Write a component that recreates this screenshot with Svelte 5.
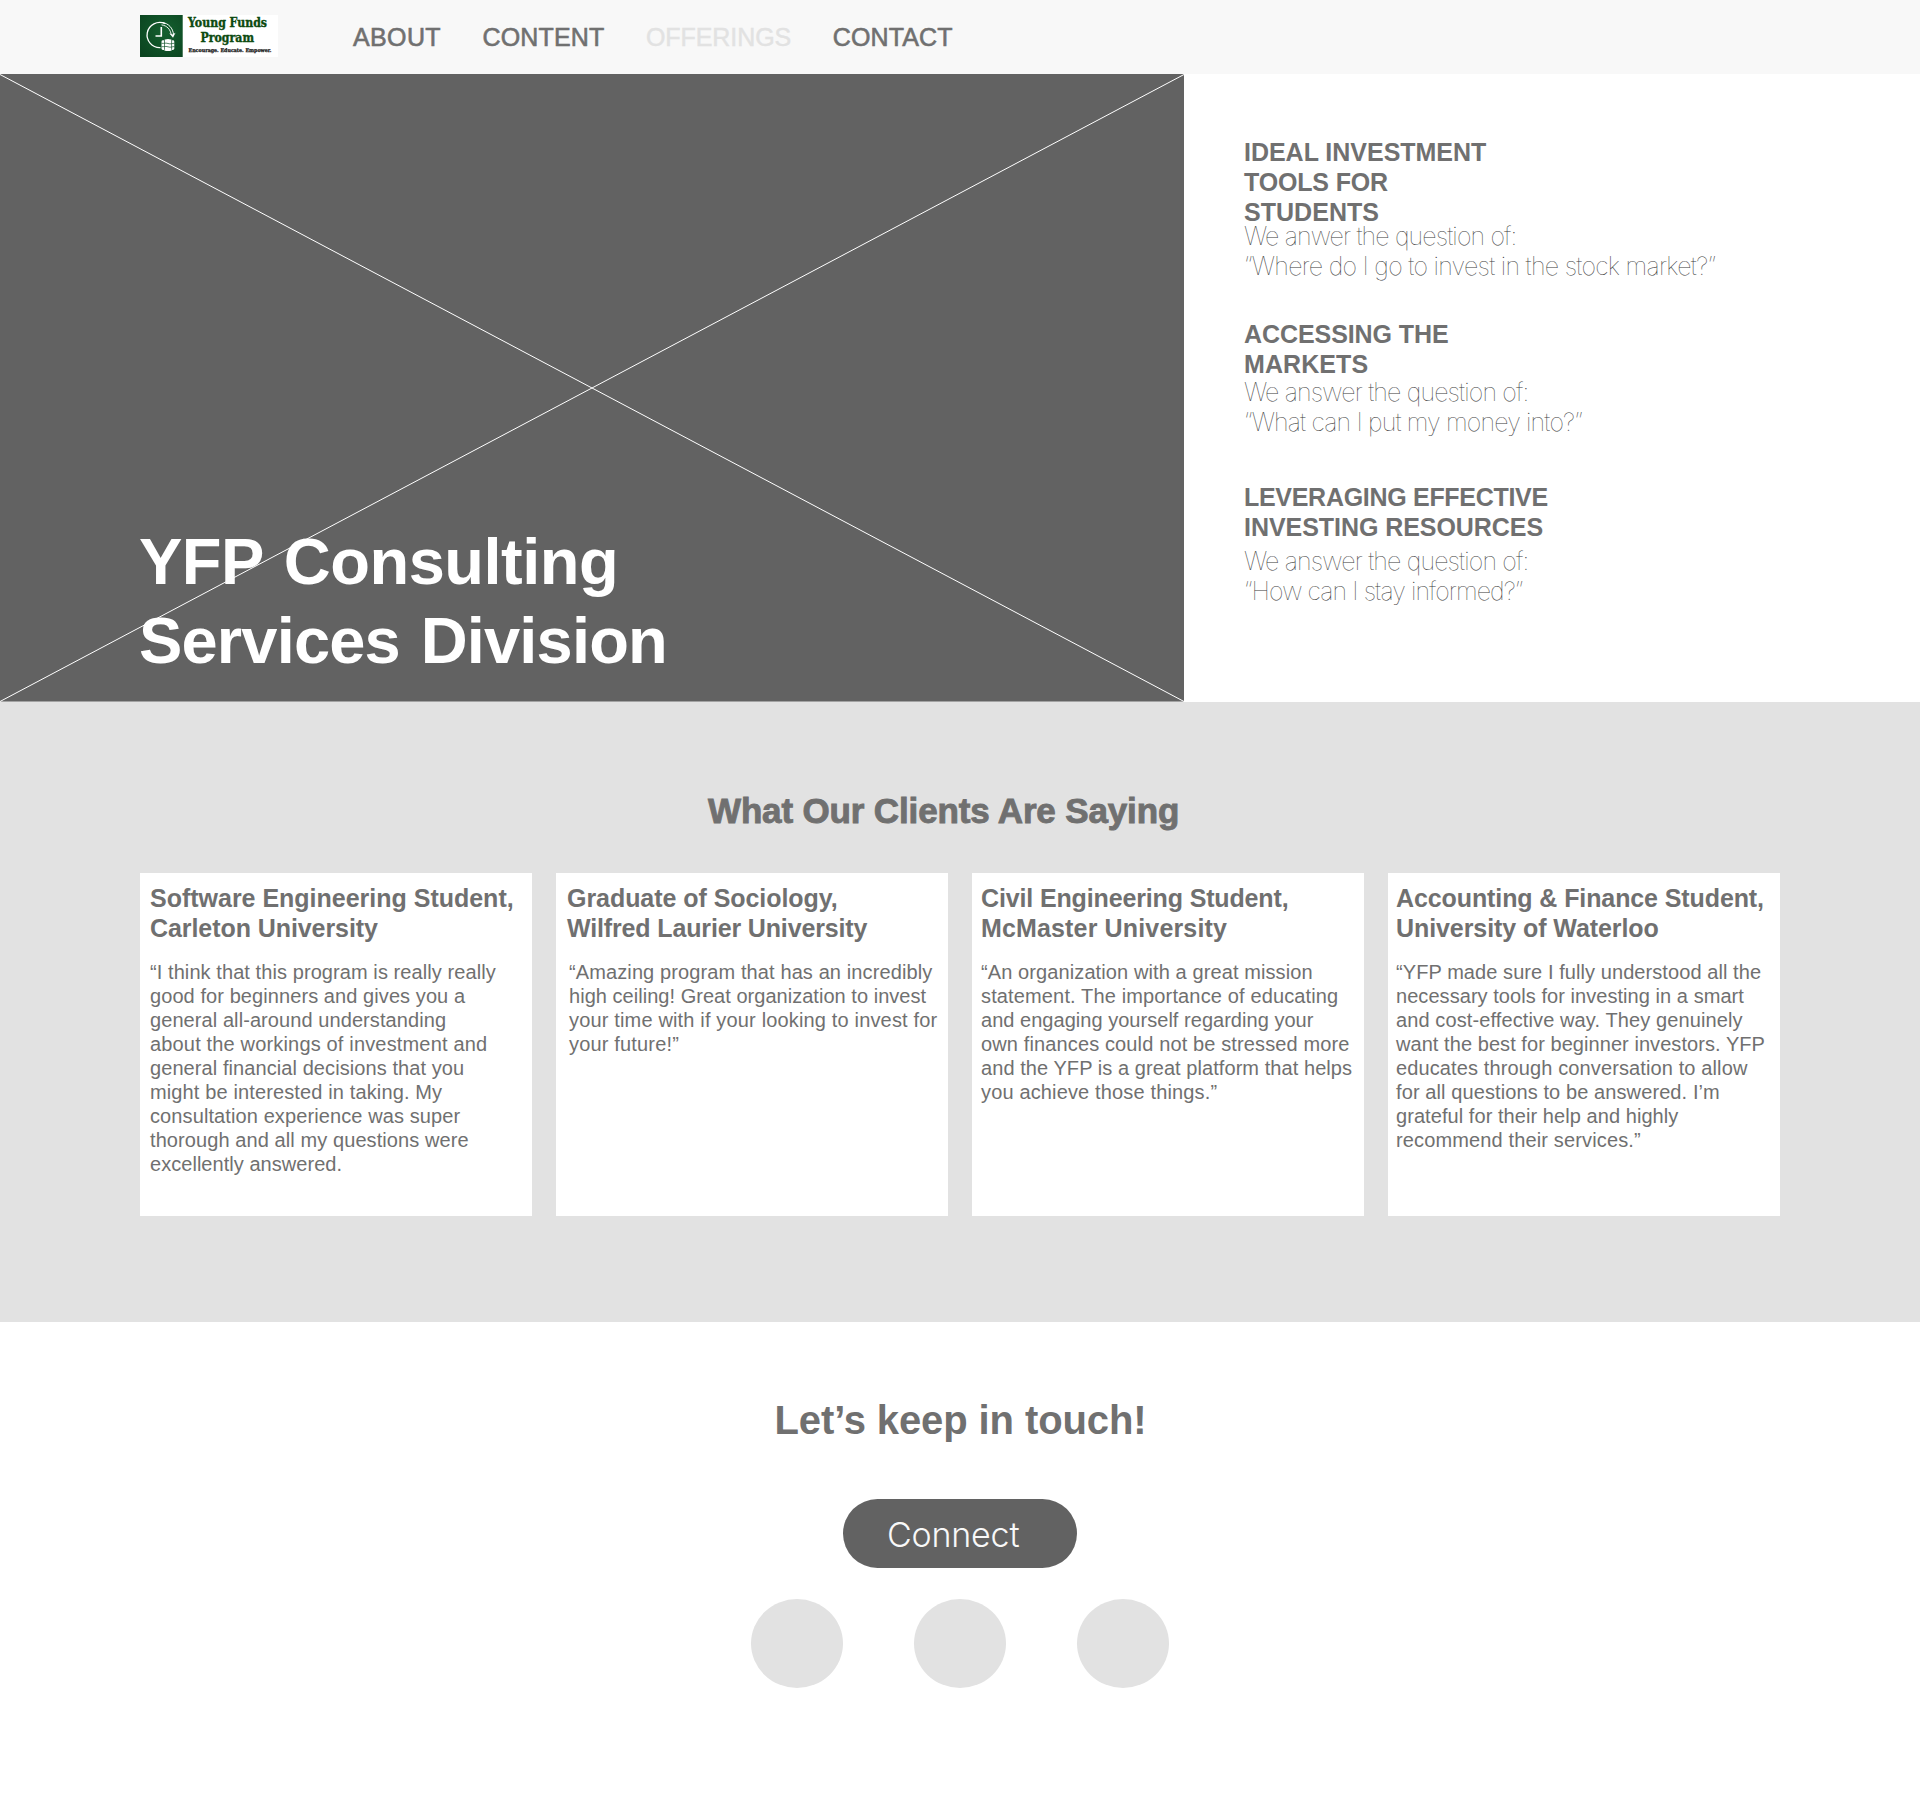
<script>
  // Every line of copy is a [text, tracking in px] pair, so line breaks stay fixed.
  const nav = [
    { label: 'ABOUT', tracking: 0.37 },
    { label: 'CONTENT', tracking: 0.13 },
    { label: 'OFFERINGS', tracking: -0.06, muted: true },
    { label: 'CONTACT', tracking: 0.1 }
  ];

  const headline = [['YFP Consulting', -0.5], ['Services Division', -0.82]];

  const topics = [
    {
      kind: 'tools',
      title: [['IDEAL INVESTMENT', -0.02], ['TOOLS FOR', -0.16], ['STUDENTS', 0.03]],
      body: [
        ['We anwer the question of:', -0.866],
        ['“Where do I go to invest in the stock market?”', -0.72]
      ]
    },
    {
      kind: 'markets',
      title: [['ACCESSING THE', -0.075], ['MARKETS', 0.09]],
      body: [['We answer the question of:', -0.845], ['“What can I put my money into?”', -0.85]]
    },
    {
      kind: 'resources',
      title: [['LEVERAGING EFFECTIVE', -0.294], ['INVESTING RESOURCES', -0.05]],
      body: [['We answer the question of:', -0.845], ['“How can I stay informed?”', -0.92]]
    }
  ];

  const reviews = [
    {
      kind: 'software',
      title: [['Software Engineering Student,', -0.01], ['Carleton University', -0.07]],
      body: [
        ['“I think that this program is really really', 0.08],
        ['good for beginners and gives you a', 0.08],
        ['general all-around understanding', 0.08],
        ['about the workings of investment and', 0.165],
        ['general financial decisions that you', 0.08],
        ['might be interested in taking. My', 0.13],
        ['consultation experience was super', 0.104],
        ['thorough and all my questions were', 0.087],
        ['excellently answered.', 0.04]
      ]
    },
    {
      kind: 'sociology',
      title: [['Graduate of Sociology,', -0.05], ['Wilfred Laurier University', -0.145]],
      body: [
        ['“Amazing program that has an incredibly', 0.11],
        ['high ceiling! Great organization to invest', 0.032],
        ['your time with if your looking to invest for', 0.16],
        ['your future!”', 0.17]
      ]
    },
    {
      kind: 'civil',
      title: [['Civil Engineering Student,', -0.14], ['McMaster University', 0.15]],
      body: [
        ['“An organization with a great mission', 0.102],
        ['statement. The importance of educating', 0.14],
        ['and engaging yourself regarding your', 0.03],
        ['own finances could not be stressed more', 0.13],
        ['and the YFP is a great platform that helps', 0.065],
        ['you achieve those things.”', 0.15]
      ]
    },
    {
      kind: 'finance',
      title: [['Accounting & Finance Student,', -0.1], ['University of Waterloo', -0.077]],
      body: [
        ['“YFP made sure I fully understood all the', 0.075],
        ['necessary tools for investing in a smart', 0.055],
        ['and cost-effective way. They genuinely', 0.11],
        ['want the best for beginner investors. YFP', 0.06],
        ['educates through conversation to allow', 0.12],
        ['for all questions to be answered. I’m', 0.1],
        ['grateful for their help and highly', 0.064],
        ['recommend their services.”', 0.14]
      ]
    }
  ];

  const socials = ['first', 'second', 'third'];
</script>

{#snippet lines(list)}
  {#each list as [text, tracking]}
    <span class="line" style:letter-spacing="{tracking}px">{text}</span>
  {/each}
{/snippet}

<header class="bar">
  <svg class="logo" viewBox="0 0 138 42" width="138" height="42" role="img" aria-label="Young Funds Program">
    <defs>
      <radialGradient id="felt" cx="0.6" cy="0.4" r="0.75">
        <stop offset="0" stop-color="#14602f" />
        <stop offset="1" stop-color="#0b4420" />
      </radialGradient>
    </defs>
    <rect width="138" height="42" fill="#fff" />
    <rect width="42.7" height="42" fill="url(#felt)" />
    <g fill="none" stroke="#fff" stroke-width="1.3">
      <path d="M20.5 32.6A12.6 12.6 0 1 1 25 8.6" />
      <path d="M22 7.4C28.500 8.300 33 13 33.600 20" stroke-width="1" />
      <path d="M21.500 9.900C27 10.500 30.500 14.500 31.300 20" stroke-width="0.9" />
      <path d="M21.300 12V21H15.500" stroke-width="1.6" />
    </g>
    <path d="M29.300 18.300 33 22.800 35.500 17.800 32.600 19.600Z" fill="#fff" />
    <g fill="#fff">
      <rect x="21.500" y="25.300" width="12.800" height="9.700" rx="1.400" />
      <ellipse cx="28" cy="25.600" rx="4" ry="1.500" />
      <ellipse cx="28" cy="34.500" rx="4" ry="1.500" />
    </g>
    <g fill="none" stroke="#0f5027" stroke-width="0.7">
      <path d="M21.500 28.300C24 28.800 25 27.500 28 28.500S32 28.200 34.500 28.300" />
      <path d="M21.500 31.600C24 32.100 25 30.800 28 31.800S32 31.500 34.500 31.600" />
      <path d="M24.500 24.500V34.800M31.600 24.500V34.800" />
    </g>
    <text class="brand" x="48" y="11.900" textLength="79" lengthAdjust="spacingAndGlyphs">Young Funds</text>
    <text class="brand" x="60.500" y="26.500" textLength="53.500" lengthAdjust="spacingAndGlyphs">Program</text>
    <text class="motto" x="48.500" y="37.300" textLength="83" lengthAdjust="spacingAndGlyphs">Encourage. Educate. Empower.</text>
  </svg>
  <nav class="links">
    {#each nav as item}
      <a class="link" class:muted={item.muted} style:letter-spacing="{item.tracking}px">{item.label}</a>
    {/each}
  </nav>
</header>

<section class="hero">
  <div class="image">
    <svg class="cross" viewBox="0 0 1184 628" preserveAspectRatio="none" aria-hidden="true">
      <path d="M0 0.500 1184 627.500M0 627.500 1184 0.500" />
    </svg>
    <h1 class="headline">{@render lines(headline)}</h1>
  </div>
  <div class="topics">
    {#each topics as topic}
      <article class="topic {topic.kind}">
        <h2 class="title">{@render lines(topic.title)}</h2>
        <p class="answer">{@render lines(topic.body)}</p>
      </article>
    {/each}
  </div>
</section>

<section class="reviews">
  <h2 class="heading">What Our Clients Are Saying</h2>
  <div class="cards">
    {#each reviews as review}
      <article class="card {review.kind}">
        <h3 class="title">{@render lines(review.title)}</h3>
        <p class="quote">{@render lines(review.body)}</p>
      </article>
    {/each}
  </div>
</section>

<section class="contact">
  <h2 class="invite">Let’s keep in touch!</h2>
  <button class="connect">Connect</button>
  <div class="socials">
    {#each socials as name}
      <span class="dot {name}"></span>
    {/each}
  </div>
</section>

<style>
  :global(body) {
    margin: 0;
    background: #fff;
  }
  :global(#app) {
    font-family: 'Liberation Sans', Arial, sans-serif;
    color: #707070;
  }
  h1,
  h2,
  h3,
  p {
    margin: 0;
  }
  .line {
    display: block;
    white-space: nowrap;
  }

  .bar {
    display: flex;
    align-items: center;
    box-sizing: border-box;
    height: 74px;
    padding-left: 140px;
    background: #f8f8f8;
  }
  .logo {
    flex: none;
    margin-top: -2px;
  }
  .brand {
    font: 700 12px 'DejaVu Serif', serif;
    fill: #0c4a10;
    stroke: #0c4a10;
    stroke-width: 0.4px;
  }
  .motto {
    font: 700 5.2px 'DejaVu Serif', serif;
    fill: #111;
    stroke: #111;
    stroke-width: 0.25px;
  }
  .links {
    display: flex;
    gap: 41.6px;
    margin-left: 75px;
  }
  .link {
    font-size: 25px;
    line-height: 30px;
    -webkit-text-stroke: 0.6px #707070;
  }
  .muted {
    color: #e2e2e2;
    -webkit-text-stroke: 0.4px #e2e2e2;
  }

  .hero {
    display: flex;
    height: 628px;
  }
  .image {
    position: relative;
    display: flex;
    align-items: flex-end;
    box-sizing: border-box;
    width: 1184px;
    padding: 0 0 21px 139px;
    border-bottom: 1px solid #a3a3a3;
    background: #626262;
  }
  .cross {
    position: absolute;
    inset: 0;
    width: 100%;
    height: 628px;
    fill: none;
    stroke: #fff;
    stroke-width: 1;
  }
  .headline {
    position: relative;
    font-size: 65px;
    line-height: 79px;
    word-spacing: 3.5px;
    color: #fff;
  }
  .topics {
    padding: 63px 0 0 60px;
  }
  .title {
    font-size: 25px;
    line-height: 30px;
  }
  .answer {
    font-family: Inter, sans-serif;
    font-size: 25px;
    font-weight: 100;
    line-height: 30px;
    color: #3c3c3c;
  }
  .tools .answer {
    margin-top: -6px;
  }
  .markets {
    margin-top: 38px;
  }
  .markets .answer {
    margin-top: -2px;
  }
  .resources {
    margin-top: 45px;
  }
  .resources .answer {
    margin-top: 4px;
  }

  .reviews {
    box-sizing: border-box;
    height: 620px;
    padding: 88px 140px 0;
    background: #e2e2e2;
  }
  .heading {
    padding-left: 568px;
    font-size: 35px;
    line-height: 42px;
    letter-spacing: -0.15px;
    -webkit-text-stroke: 0.9px #707070;
  }
  .cards {
    display: grid;
    grid-template-columns: repeat(4, 392px);
    gap: 24px;
    margin-top: 41px;
  }
  .card {
    box-sizing: border-box;
    height: 343px;
    padding: 10px 0 0 10px;
    background: #fff;
  }
  .quote {
    margin-top: 17px;
    font-size: 20px;
    line-height: 24px;
  }
  .sociology {
    padding-left: 11px;
  }
  .sociology .quote {
    padding-left: 2px;
  }
  .civil {
    padding-left: 9px;
  }
  .finance {
    padding-left: 8px;
  }

  .contact {
    display: flex;
    flex-direction: column;
    align-items: center;
    padding-top: 74px;
  }
  .invite {
    padding-left: 1px;
    font-size: 40px;
    line-height: 48px;
    letter-spacing: -0.1px;
  }
  .connect {
    width: 234px;
    height: 69px;
    margin-top: 55px;
    padding: 2px 0 0 44px;
    border: 0;
    border-radius: 35px;
    background: #626262;
    color: #f8f8f8;
    font: 300 34px/67px Inter, sans-serif;
    letter-spacing: -0.2px;
    text-align: left;
  }
  .socials {
    display: flex;
    gap: 71px;
    margin-top: 31px;
  }
  .dot {
    width: 92px;
    height: 89px;
    border-radius: 50%;
    background: #e2e2e2;
  }
</style>
